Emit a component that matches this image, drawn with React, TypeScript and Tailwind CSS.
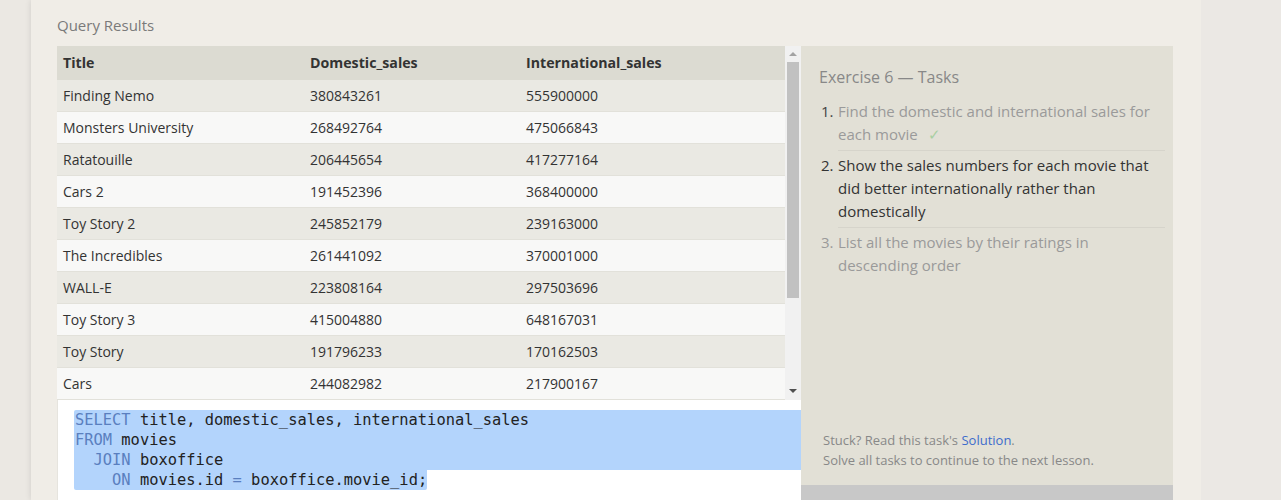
import React from "react";

const rows: [string, string, string][] = [
  ["Finding Nemo", "380843261", "555900000"],
  ["Monsters University", "268492764", "475066843"],
  ["Ratatouille", "206445654", "417277164"],
  ["Cars 2", "191452396", "368400000"],
  ["Toy Story 2", "245852179", "239163000"],
  ["The Incredibles", "261441092", "370001000"],
  ["WALL-E", "223808164", "297503696"],
  ["Toy Story 3", "415004880", "648167031"],
  ["Toy Story", "191796233", "170162503"],
  ["Cars", "244082982", "217900167"],
];

export default function App() {
  return (
    <div
      className="flex h-[500px] w-[1281px] overflow-hidden bg-[#ebe8e4]"
      style={{ fontFamily: '"Open Sans", "Noto Sans", sans-serif' }}
    >
      <div className="w-[31px] shrink-0 bg-[#ebe8e3]" />
      <div className="flex w-[1170px] shrink-0 flex-col bg-[#f0ede7] pl-[26px] pr-[28px] shadow-[0_0_6px_rgba(0,0,0,0.12)]">
        <div className="h-[46px] shrink-0 pt-[14px] text-[15px] leading-[22px] text-[#7a7a7a]">Query Results</div>
        <div className="flex shrink-0">
          <div className="flex w-[744px] shrink-0 flex-col">
            <div className="flex h-[354px] shrink-0">
              <div className="w-[728px] shrink-0 text-[14px] text-[#333]">
                <div className="flex h-[34px] items-center bg-[#dcdbd2] pl-[6px] text-[14.2px] font-bold text-[#333]">
                  <div className="w-[247px]">Title</div>
                  <div className="w-[216px]">Domestic_sales</div>
                  <div>International_sales</div>
                </div>
                {rows.map((r, i) => (
                  <div
                    key={i}
                    className={`flex h-[32px] items-center border-b border-[#e2e1da] pl-[6px] ${
                      i % 2 === 0 ? "bg-[#eae9e3]" : "bg-[#f8f8f7]"
                    }`}
                  >
                    <div className="w-[247px]">{r[0]}</div>
                    <div className="w-[216px]">{r[1]}</div>
                    <div>{r[2]}</div>
                  </div>
                ))}
              </div>
              <div className="relative w-[16px] shrink-0 bg-[#f1f1f1]">
                <div className="absolute left-[4px] top-[6px] h-0 w-0 border-x-[4px] border-b-[4px] border-x-transparent border-b-[#a3a3a3]" />
                <div className="absolute left-[2px] top-[16px] h-[236px] w-[12px] bg-[#c1c1c1]" />
                <div className="absolute left-[4px] bottom-[7px] h-0 w-0 border-x-[4px] border-t-[4px] border-x-transparent border-t-[#505050]" />
              </div>
            </div>
            <div
              className="h-[110px] shrink-0 border-l border-[#e6e4de] bg-white pt-[10px] text-[15.4px] leading-[20px] text-[#222]"
              style={{ fontFamily: '"DejaVu Sans Mono", "Liberation Mono", monospace' }}
            >
              <div className="ml-[16px] rounded-tl-[2px] bg-[#b3d4fc] pl-[1px] whitespace-pre">
                <span className="text-[#5a7fbf]">SELECT</span> title, domestic_sales, international_sales
              </div>
              <div className="ml-[16px] bg-[#b3d4fc] pl-[1px] whitespace-pre">
                <span className="text-[#5a7fbf]">FROM</span> movies
              </div>
              <div className="ml-[16px] bg-[#b3d4fc] pl-[1px] whitespace-pre">
                {"  "}<span className="text-[#5a7fbf]">JOIN</span> boxoffice
              </div>
              <div className="ml-[16px] w-[353px] rounded-b-[2px] bg-[#b3d4fc] pl-[1px] whitespace-pre">
                {"    "}<span className="text-[#5a7fbf]">ON</span> movies.id <span className="text-[#5a7fbf]">=</span> boxoffice.movie_id;
              </div>
            </div>
          </div>
          <div className="flex w-[372px] shrink-0 flex-col">
            <div className="flex h-[439px] shrink-0 flex-col bg-[#e2e0d6] pl-[18px] pr-[8px]">
              <div className="pt-[19px] text-[16px] leading-[24px] text-[#888]">Exercise 6 — Tasks</div>
              <ol className="mt-[11px] text-[15px] leading-[23px]">
                <li className="flex">
                  <span className="w-[19px] shrink-0 pl-[2px] text-[#444]">1.</span>
                  <div className="flex-1 border-b border-[#d6d4cb] pb-[4px] text-[#9a9a9a]">
                    <span>Find the domestic and international sales for each movie</span>
                    <span className="ml-[10px] inline-block text-[#a9cfa2]">✓</span>
                  </div>
                </li>
                <li className="flex">
                  <span className="w-[19px] shrink-0 pl-[2px] pt-[3px] text-[#333]">2.</span>
                  <div className="flex-1 border-b border-[#d6d4cb] pb-[4px] pt-[3px] text-[#333]">
                    Show the sales numbers for each movie that did better internationally rather than domestically
                  </div>
                </li>
                <li className="flex">
                  <span className="w-[19px] shrink-0 pl-[2px] pt-[3px] text-[#9a9a9a]">3.</span>
                  <div className="flex-1 pt-[3px] text-[#9a9a9a]">
                    List all the movies by their ratings in descending order
                  </div>
                </li>
              </ol>
              <div className="mt-auto pb-[15px] pl-[4px] text-[13px] leading-[20px] text-[#888]">
                <div>
                  Stuck? Read this task's <span className="text-[#3d6ccc]">Solution</span>.
                </div>
                <div>Solve all tasks to continue to the next lesson.</div>
              </div>
            </div>
            <div className="h-[40px] shrink-0 bg-[#c8c8c8]" />
          </div>
        </div>
      </div>
      <div className="flex-1 bg-[#ebe8e4]" />
    </div>
  );
}
